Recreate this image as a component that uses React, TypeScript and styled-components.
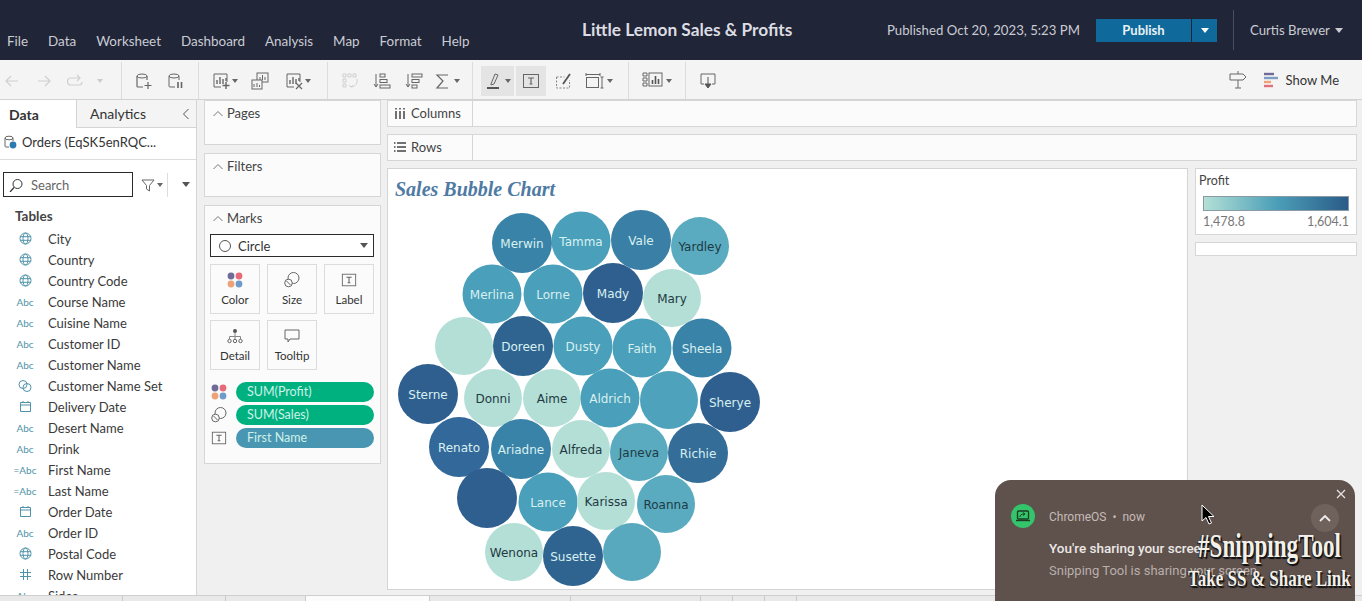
import React from 'react'
import styled, { createGlobalStyle } from 'styled-components'

const Global = createGlobalStyle`
  html, body { margin: 0; padding: 0; height: 100%; overflow: hidden; }
  body { font-family: 'Lato', 'Liberation Sans', sans-serif; background: #f0f0f0; color: #333; }
  * { box-sizing: border-box; }
`

const Page = styled.div`
  position: relative;
  width: 1362px;
  height: 601px;
  overflow: hidden;
  display: flex;
  flex-direction: column;
`

/* header */
const Header = styled.header`
  height: 60px;
  flex: none;
  display: flex;
  background: #212538;
  color: #c9ccd3;
`
const MenuBar = styled.nav`
  width: 582px;
  padding: 0 0 10px 7px;
  display: flex;
  align-items: flex-end;
  gap: 20px;
  font-size: 13.45px;
  line-height: 18px;
`
const Title = styled.h1`
  width: 305px;
  margin: 0;
  padding-top: 19px;
  font-size: 17.3px;
  line-height: 22px;
  font-weight: 700;
  color: #dcdde2;
  white-space: nowrap;
`
const HeaderRight = styled.div`
  flex: 1;
  display: flex;
  align-items: flex-start;
  padding-top: 19px;
  font-size: 13.2px;
  line-height: 23px;
`
const Published = styled.span`
  width: 209px;
  white-space: nowrap;
`
const PublishButton = styled.button`
  width: 95px;
  height: 23px;
  border: 0;
  padding: 0;
  font: 700 13px/23px 'Lato', sans-serif;
  background: #0f6a9b;
  color: #e9f1f6;
`
const PublishCaret = styled.button`
  width: 25px;
  height: 23px;
  margin-left: 1px;
  border: 0;
  padding: 0;
  background: #0f6a9b;
  display: flex;
  align-items: center;
  justify-content: center;
`
const HeaderDivider = styled.i`
  width: 1px;
  height: 40px;
  margin: -9px 16px 0 16px;
  background: #4b4f60;
`
const UserName = styled.span`
  white-space: nowrap;
  display: flex;
  align-items: center;
  gap: 5px;
`
const Caret = styled.i<{ $c?: string; $s?: number }>`
  display: inline-block;
  flex: none;
  width: 0;
  height: 0;
  border-left: ${p => p.$s ?? 3}px solid transparent;
  border-right: ${p => p.$s ?? 3}px solid transparent;
  border-top: ${p => (p.$s ?? 3) + 1}px solid ${p => p.$c ?? '#666'};
`

/* toolbar */
const Toolbar = styled.div`
  height: 40px;
  flex: none;
  display: flex;
  background: #f4f4f4;
  border-bottom: 1px solid #d2d2d2;
`
const ToolGroup = styled.div<{ $w: number; $pad?: number; $gap?: number; $plain?: boolean }>`
  width: ${p => p.$w}px;
  flex: none;
  height: 37px;
  margin-top: 2px;
  padding-left: ${p => p.$pad ?? 0}px;
  display: flex;
  align-items: center;
  gap: ${p => p.$gap ?? 8}px;
  border-right: ${p => (p.$plain ? 'none' : '1px solid #dcdcdc')};
`
const Tool = styled.span<{ $w?: number; $active?: boolean }>`
  width: ${p => p.$w ?? 24}px;
  height: 30px;
  flex: none;
  display: flex;
  align-items: center;
  justify-content: center;
  gap: 2px;
  background: ${p => (p.$active ? '#e4e4e4' : 'transparent')};
`
const ToolbarEnd = styled.div`
  flex: 1;
  display: flex;
  align-items: center;
  justify-content: flex-end;
  padding-right: 23px;
  gap: 15px;
  font-size: 13px;
  color: #333;
`
const ShowMe = styled.span`
  display: flex;
  align-items: center;
  gap: 7px;
`

/* body */
const Body = styled.div`
  height: 495px;
  flex: none;
  display: flex;
`
const DataPane = styled.aside`
  width: 197px;
  flex: none;
  background: #fff;
  border-right: 1px solid #d4d4d4;
  overflow: hidden;
`
const PaneTabs = styled.div`
  height: 28px;
  display: flex;
  font-size: 14px;
`
const PaneTab = styled.div<{ $active?: boolean }>`
  width: ${p => (p.$active ? 76 : 120)}px;
  padding-left: ${p => (p.$active ? 9 : 13)}px;
  line-height: 27px;
  font-weight: ${p => (p.$active ? 700 : 400)};
  background: ${p => (p.$active ? '#fff' : '#f4f4f4')};
  border-bottom: ${p => (p.$active ? 'none' : '1px solid #d4d4d4')};
  border-left: ${p => (p.$active ? 'none' : '1px solid #d4d4d4')};
  display: flex;
  align-items: center;
  justify-content: space-between;
  padding-right: 6px;
`
const SourceRow = styled.div`
  height: 32px;
  padding: 0 0 4px 3px;
  display: flex;
  align-items: center;
  gap: 5px;
  font-size: 13px;
  border-bottom: 1px solid #dcdcdc;
  white-space: nowrap;
`
const SearchRow = styled.div`
  height: 37px;
  padding: 12px 0 0 3px;
  display: flex;
  align-items: center;
`
const SearchBox = styled.div`
  width: 130px;
  height: 25px;
  border: 1px solid #2a2a2a;
  display: flex;
  align-items: center;
  gap: 8px;
  padding-left: 5px;
  font-size: 13px;
  color: #666;
`
const SearchTools = styled.div`
  width: 63px;
  display: flex;
  align-items: center;
  padding-left: 8px;
  gap: 2px;
`
const SearchDivider = styled.i`
  width: 1px;
  height: 24px;
  margin: 0 12px 0 2px;
  background: #ddd;
`
const TablesHead = styled.div`
  margin-top: 11px;
  padding-left: 15px;
  font-size: 13.5px;
  font-weight: 700;
  line-height: 17px;
  color: #444;
`
const FieldList = styled.ul`
  list-style: none;
  margin: 3px 0 0;
  padding: 0;
`
const Field = styled.li`
  height: 21px;
  display: flex;
  align-items: center;
  font-size: 13px;
  color: #3a3a3a;
  white-space: nowrap;
`
const FieldIconBox = styled.span`
  width: 24px;
  margin-right: 11px;
  margin-left: 13px;
  text-align: center;
  flex: none;
  display: flex;
  justify-content: center;
  color: #4f93a8;
  font-size: 10px;
`

/* cards column */
const CardsColumn = styled.div`
  width: 190px;
  flex: none;
  padding: 0 6px 0 7px;
  display: flex;
  flex-direction: column;
  gap: 8px;
`
const Card = styled.section<{ $h: number }>`
  height: ${p => p.$h}px;
  flex: none;
  background: #fbfbfb;
  border: 1px solid #d6d6d6;
  font-size: 13px;
`
const CardHead = styled.div`
  height: 24px;
  padding-left: 8px;
  display: flex;
  align-items: center;
  gap: 4px;
  color: #444;
`
const MarkSelect = styled.div`
  margin: 4px 6px 0 5px;
  height: 23px;
  border: 1px solid #2a2a2a;
  background: #fff;
  display: flex;
  align-items: center;
  padding: 0 5px 0 8px;
  gap: 7px;
  font-size: 13px;
`
const MarkCircle = styled.i`
  width: 12px;
  height: 12px;
  border-radius: 50%;
  border: 1px solid #555;
`
const MarkGrid = styled.div`
  margin: 7px 6px 0 5px;
  display: grid;
  grid-template-columns: repeat(3, 50px);
  gap: 6px 7px;
`
const MarkButton = styled.div`
  height: 50px;
  border: 1px solid #dcdcdc;
  background: #fbfbfb;
  display: flex;
  flex-direction: column;
  align-items: center;
  justify-content: flex-end;
  gap: 5px;
  padding-bottom: 7px;
  font-size: 11.5px;
  color: #333;
`
const PillList = styled.div`
  margin: 12px 6px 0 5px;
  display: flex;
  flex-direction: column;
  gap: 3px;
`
const PillRow = styled.div`
  display: flex;
  align-items: center;
  gap: 8px;
`
const PillIcon = styled.span`
  width: 18px;
  display: flex;
  justify-content: center;
`
const Pill = styled.div<{ $c: string }>`
  width: 138px;
  height: 20px;
  border-radius: 10px;
  padding-left: 11px;
  background: ${p => p.$c};
  color: #cdf1e8;
  font-size: 12.5px;
  line-height: 20px;
`

/* workspace */
const Workspace = styled.div`
  flex: 1;
  min-width: 0;
  padding-right: 5px;
  display: flex;
  flex-direction: column;
  gap: 7px;
`
const Shelf = styled.div`
  height: 27px;
  flex: none;
  display: flex;
  background: #fbfbfb;
  border: 1px solid #d6d6d6;
  font-size: 13px;
`
const ShelfLabel = styled.div`
  width: 85px;
  border-right: 1px solid #d6d6d6;
  padding: 0 0 2px 6px;
  display: flex;
  align-items: center;
  gap: 5px;
  color: #444;
`
const ViewRow = styled.div`
  flex: 1;
  min-height: 0;
  display: flex;
  gap: 7px;
  padding-bottom: 5px;
`
const Canvas = styled.div`
  width: 801px;
  background: #fff;
  border: 1px solid #d4d4d4;
  overflow: hidden;
`
const SheetTitle = styled.h2`
  margin: 0;
  height: 40px;
  padding: 9px 0 0 7px;
  font: italic 700 20px/23px 'Liberation Serif', serif;
  color: #4e7aa3;
`
const LegendColumn = styled.div`
  flex: 1;
  display: flex;
  flex-direction: column;
  gap: 7px;
`
const Legend = styled.div`
  height: 67px;
  background: #fff;
  border: 1px solid #d6d6d6;
  padding: 4px 3px 0;
  font-size: 12.5px;
  color: #444;
`
const GradientBar = styled.div`
  height: 15px;
  margin: 8px 4px 0 4px;
  background: linear-gradient(90deg, #b3e0d6 0%, #4c9fb8 50%, #2a5b88 100%);
  border: 1px solid #8a9aa5;
`
const LegendScale = styled.div`
  margin: 3px 4px 0 4px;
  display: flex;
  justify-content: space-between;
  font-size: 12.5px;
  color: #777;
`
const LegendStub = styled.div`
  height: 14px;
  background: #fff;
  border: 1px solid #d6d6d6;
`

/* sheet tabs */
const SheetTabs = styled.div`
  flex: 1;
  display: flex;
  background: #e9e9e9;
  border-top: 1px solid #cfcfcf;
`
const SheetTab = styled.div<{ $w: number; $active?: boolean }>`
  width: ${p => p.$w}px;
  flex: none;
  border-right: 1px solid #c9c9c9;
  background: ${p => (p.$active ? '#fbfbfb' : 'transparent')};
`

/* notification overlay */
const Notification = styled.div`
  position: absolute;
  left: 995px;
  top: 480px;
  width: 360px;
  height: 160px;
  border-radius: 16px;
  background: #5f514c;
  padding: 24px 0 0 16px;
  display: flex;
  gap: 12px;
  font-family: 'Roboto', sans-serif;
`
const NotifyBadge = styled.div`
  width: 24px;
  height: 24px;
  border-radius: 50%;
  background: #34c46c;
  flex: none;
  display: flex;
  align-items: center;
  justify-content: center;
`
const NotifyText = styled.div`
  padding: 4px 0 0 2px;
`
const NotifyMeta = styled.div`
  font-size: 12px;
  line-height: 18px;
  color: #c4bcb8;
`
const NotifyTitle = styled.div`
  margin-top: 13px;
  font-size: 13.5px;
  line-height: 18px;
  font-weight: 500;
  color: #ece8e6;
`
const NotifyBody = styled.div`
  margin-top: 5px;
  font-size: 13px;
  line-height: 18px;
  color: #b8afab;
`
const NotifyAction = styled.div`
  margin-top: 20px;
  font-size: 13px;
  font-weight: 500;
  color: #5fd08a;
`
const CloseButton = styled.span`
  position: absolute;
  right: 8px;
  top: 8px;
  display: flex;
`
const ExpandButton = styled.span`
  position: absolute;
  right: 16px;
  top: 24px;
  width: 28px;
  height: 28px;
  border-radius: 50%;
  background: #6f625d;
  display: flex;
  align-items: center;
  justify-content: center;
`
const Cursor = styled.svg`
  position: absolute;
  left: 1201px;
  top: 504px;
`
const WatermarkTop = styled.div`
  position: absolute;
  left: 1198px;
  top: 527px;
  transform: scaleX(0.7);
  transform-origin: left top;
  font: 700 33px/38px 'Liberation Serif', serif;
  color: #f4f1ea;
  white-space: nowrap;
  text-shadow: 2px 2px 1px #111, -1px 1px 1px #222;
`
const WatermarkBottom = styled.div`
  position: absolute;
  left: 1188px;
  top: 566px;
  transform: scaleX(0.74);
  transform-origin: left top;
  font: 700 23px/26px 'Liberation Serif', serif;
  color: #f4f1ea;
  white-space: nowrap;
  text-shadow: 2px 2px 1px #111, -1px 1px 1px #222;
`

/* icons */
const stroke = { fill: 'none', stroke: '#666', strokeWidth: 1 }
const Svg = ({ s = 18, children }: { s?: number; children: React.ReactNode }) => (
  <svg width={s} height={s} viewBox={`0 0 ${s} ${s}`} style={{ flex: 'none', display: 'block' }}>{children}</svg>
)
const Back = () => <Svg><path d="M15 9H3M8 4 3 9l5 5" fill="none" stroke="#d0d0d0" strokeWidth="1.2" /></Svg>
const Forward = () => <Svg><path d="M3 9h12M10 4l5 5-5 5" fill="none" stroke="#d0d0d0" strokeWidth="1.2" /></Svg>
const Loop = () => <Svg><path d="M13 6H5a3 3 0 0 0 0 7h8a3 3 0 0 0 3-3M11 3l3 3-3 3" transform="translate(-1 0)" fill="none" stroke="#d0d0d0" strokeWidth="1.2" /></Svg>
const DbPlus = () => <Svg><ellipse cx="7" cy="4" rx="5" ry="2" {...stroke} /><path d="M2 4v10q0 1 1 1h5M12 4v4M13 10v7M9.5 13.5h7" {...stroke} strokeWidth="1.2" /></Svg>
const DbPause = () => <Svg><ellipse cx="7" cy="4" rx="5" ry="2" {...stroke} /><path d="M2 4v10q0 1 1 1h5M12 4v4" {...stroke} /><path d="M11 10v6M14.5 10v6" stroke="#666" strokeWidth="1.6" /></Svg>
const NewSheet = ({ x }: { x?: boolean }) => (
  <Svg>
    <path d="M9 15H2V2h13v8" {...stroke} />
    <path d="M5 12V8M8 12V5M11 12V7M14 9V6" stroke="#666" strokeWidth="1.4" />
    {x ? <path d="M11 11l6 6M17 11l-6 6" stroke="#666" strokeWidth="1.2" /> : <path d="M14 10v7M10.5 13.5h7" stroke="#666" strokeWidth="1.4" />}
  </Svg>
)
const Duplicate = () => (
  <Svg>
    <rect x="6" y="1" width="11" height="9" {...stroke} fill="#f4f4f4" />
    <rect x="1" y="8" width="10" height="9" {...stroke} fill="#f4f4f4" />
    <path d="M9 8V5M11.5 8V3M14 8V5M3 15v-3M6 15v-4M8.5 15v-2" stroke="#666" />
  </Svg>
)
const Swap = () => (
  <Svg><path d="M2 2h3v3H2zM7 2h3v3H7zM12 2h3v3h-3zM2 7h3v3H2zM2 12h3v3H2z" fill="none" stroke="#cfcfcf" /><path d="M16 7c1 4-2 8-6 8M8 13l2 2 2-2" fill="none" stroke="#cfcfcf" /></Svg>
)
const SortAsc = () => (
  <Svg><path d="M3 2v13M1 12l2 3 2-3" {...stroke} /><rect x="7" y="2" width="5" height="3" {...stroke} /><rect x="7" y="7.5" width="7" height="3" {...stroke} /><rect x="7" y="13" width="10" height="3" {...stroke} /></Svg>
)
const SortDesc = () => (
  <Svg><path d="M3 2v13M1 12l2 3 2-3" {...stroke} /><rect x="7" y="2" width="10" height="3" {...stroke} /><rect x="7" y="7.5" width="7" height="3" {...stroke} /><rect x="7" y="13" width="5" height="3" {...stroke} /></Svg>
)
const Sigma = () => <Svg><path d="M14 3H3l6 6-6 7h11" fill="none" stroke="#666" strokeWidth="1.2" /></Svg>
const Highlight = () => (
  <Svg><path d="M6 12 10 2l3 1-4 9-3 1z" {...stroke} /><path d="M2 16h12" stroke="#555" strokeWidth="2" /></Svg>
)
const TextBox = ({ s = 18 }: { s?: number }) => (
  <svg width={s} height={s} viewBox="0 0 18 18" style={{ flex: 'none', display: 'block' }}><rect x="1.5" y="2.5" width="15" height="13" {...stroke} /><path d="M6 6h6M9 6v6M7.5 12h3" stroke="#666" strokeWidth="1.2" /></svg>
)
const EditBox = () => (
  <Svg><path d="M1.5 5h8M1.5 5v11h13v-8" fill="none" stroke="#888" strokeDasharray="2 1.5" /><path d="M8 12l7-10" stroke="#555" strokeWidth="1.8" /></Svg>
)
const FitBox = () => (
  <Svg s={20}><path d="M1 1.5h14M1 0v3M15 0v3" transform="translate(0 2)" stroke="#666" fill="none" /><rect x="1.5" y="6.5" width="12" height="10" {...stroke} /><path d="M17 6v11M15.5 6h3M15.5 17h3" stroke="#666" fill="none" /></Svg>
)
const Cards = () => (
  <Svg s={22}><path d="M1 3h4v3H1zM1 8h4v3H1zM1 13h4v3H1z" {...stroke} /><rect x="7" y="3" width="13" height="13" {...stroke} /><path d="M10.5 14v-4M13.5 14V6M16.5 14V9" stroke="#555" strokeWidth="1.6" /></Svg>
)
const Present = () => (
  <Svg><path d="M5 12H2V2h14v10h-3" {...stroke} /><path d="M9 5v9M6 12l3 4 3-4z" stroke="#555" fill="#555" strokeWidth="1" /></Svg>
)
const SignPost = () => (
  <Svg s={20}><path d="M2 4h13l3 3-3 3H2zM10 1v3M10 10v8M7 18h6" {...stroke} /></Svg>
)
const ShowMeIcon = () => (
  <Svg s={16}>
    <path d="M1 2h10" stroke="#6f6a96" strokeWidth="2.4" />
    <path d="M1 6h14" stroke="#7f9cc4" strokeWidth="2.4" />
    <path d="M1 10h7" stroke="#eda27a" strokeWidth="2.4" />
    <path d="M1 14h9" stroke="#e2707c" strokeWidth="2.4" />
  </Svg>
)
const Chevron = () => <svg width="10" height="7" viewBox="0 0 10 7"><path d="M.5 6 5 1.5 9.5 6" fill="none" stroke="#777" /></svg>
const SourceIcon = () => (
  <Svg s={14}><ellipse cx="6" cy="3" rx="4" ry="1.8" {...stroke} /><path d="M2 3v8q0 1 1 1h3M10 3v3" {...stroke} /><circle cx="10" cy="10" r="3.4" fill="#2d7ab0" /></Svg>
)
const SearchIcon = () => <Svg s={14}><circle cx="8.5" cy="6" r="4.5" fill="none" stroke="#333" /><path d="M5 9.5 1 14" stroke="#333" strokeWidth="1.2" /></Svg>
const FilterIcon = () => <Svg s={14}><path d="M1 2h12L8.5 7.5V13L5.5 11V7.5z" {...stroke} /></Svg>
const ColorDots = ({ s = 16 }: { s?: number }) => (
  <svg width={s} height={s} viewBox="0 0 16 16">
    <circle cx="4" cy="4" r="3.4" fill="#6f6a96" />
    <circle cx="12" cy="4" r="3.4" fill="#e66a78" />
    <circle cx="4" cy="12" r="3.4" fill="#eda27a" />
    <circle cx="12" cy="12" r="3.4" fill="#6f9bc8" />
  </svg>
)
const SizeIcon = ({ s = 16 }: { s?: number }) => (
  <svg width={s} height={s} viewBox="0 0 16 16">
    <circle cx="9.5" cy="6" r="5.5" {...stroke} />
    <circle cx="4.5" cy="11" r="3.8" fill="#fbfbfb" stroke="#666" />
    <path d="M2.5 9l4 4" stroke="#666" />
  </svg>
)
const DetailIcon = () => (
  <svg width="16" height="16" viewBox="0 0 16 16">
    <circle cx="8" cy="3" r="2" fill="#555" />
    <path d="M8 5v3M2.5 11V8.5h11V11M8 8v3" stroke="#888" fill="none" />
    <circle cx="2.5" cy="13" r="1.7" {...stroke} />
    <circle cx="8" cy="13" r="1.7" {...stroke} />
    <circle cx="13.5" cy="13" r="1.7" {...stroke} />
  </svg>
)
const TooltipIcon = () => <svg width="16" height="16" viewBox="0 0 16 16"><path d="M1 2h14v9H6l-2 3v-3H1z" {...stroke} /></svg>

const Globe = () => (
  <svg width="13" height="13" viewBox="0 0 13 13" fill="none" stroke="#4f93a8">
    <circle cx="6.5" cy="6.5" r="5.5" />
    <ellipse cx="6.5" cy="6.5" rx="2.5" ry="5.5" />
    <path d="M1 4.7h11M1 8.3h11" />
  </svg>
)
const CalendarIcon = () => (
  <svg width="13" height="13" viewBox="0 0 13 13" fill="none" stroke="#4f93a8">
    <path d="M1.5 2.5h10v9h-10zM1.5 5h10M4 1v2M9 1v2" />
  </svg>
)
const SetIcon = () => (
  <svg width="14" height="14" viewBox="0 0 14 14" fill="none" stroke="#4f93a8">
    <circle cx="5" cy="5.5" r="4" />
    <circle cx="9" cy="8.5" r="4" />
  </svg>
)
const HashIcon = () => (
  <svg width="13" height="13" viewBox="0 0 13 13" fill="none" stroke="#4f93a8">
    <path d="M4.5 1v11M8.5 1v11M1 4.5h11M1 8.5h11" />
  </svg>
)

type FieldKind = 'geo' | 'abc' | 'set' | 'date' | 'param' | 'num'
const fieldIcon = (k: FieldKind) => {
  if (k === 'geo') return <Globe />
  if (k === 'set') return <SetIcon />
  if (k === 'date') return <CalendarIcon />
  if (k === 'num') return <HashIcon />
  if (k === 'param') return <span>=Abc</span>
  return <span>Abc</span>
}

const fields: [string, FieldKind][] = [
  ['City', 'geo'], ['Country', 'geo'], ['Country Code', 'geo'], ['Course Name', 'abc'],
  ['Cuisine Name', 'abc'], ['Customer ID', 'abc'], ['Customer Name', 'abc'], ['Customer Name Set', 'set'],
  ['Delivery Date', 'date'], ['Desert Name', 'abc'], ['Drink', 'abc'], ['First Name', 'param'],
  ['Last Name', 'param'], ['Order Date', 'date'], ['Order ID', 'abc'], ['Postal Code', 'geo'],
  ['Row Number', 'num'], ['Sides', 'abc'],
]

const DARK = '#2f5f8f'
const DEEP = '#3a83a8'
const MID = '#4a9fba'
const SOFT = '#5aabc0'
const PALE = '#b4dfd6'

// cx, cy, r, fill, label
const bubbles: [number, number, number, string, string][] = [
  [522, 243, 30, DEEP, 'Merwin'], [581, 241, 29.5, MID, 'Tamma'], [641, 240, 30, '#3a7fa6', 'Vale'], [700, 246, 29, SOFT, 'Yardley'],
  [492, 294, 29.5, MID, 'Merlina'], [553, 294, 29.5, MID, 'Lorne'], [613, 293, 30, DARK, 'Mady'], [672, 298, 29, PALE, 'Mary'],
  [464, 346, 29, PALE, ''], [523, 346, 30, '#2f6491', 'Doreen'], [583, 346, 29.5, MID, 'Dusty'], [642, 348, 29.5, MID, 'Faith'], [702, 348, 29.5, DEEP, 'Sheela'],
  [428, 394, 30, DARK, 'Sterne'], [493, 398, 29, PALE, 'Donni'], [552, 398, 29, PALE, 'Aime'], [610, 398, 29.5, MID, 'Aldrich'], [669, 400, 29, '#4ea2bb', ''], [730, 402, 30, DARK, 'Sherye'],
  [459, 447, 30, '#32689a', 'Renato'], [521, 449, 30, DEEP, 'Ariadne'], [581, 449, 29, PALE, 'Alfreda'], [639, 452, 29, SOFT, 'Janeva'], [698, 453, 30, '#336d98', 'Richie'],
  [487, 498, 30, DARK, ''], [548, 502, 29.5, MID, 'Lance'], [606, 501, 29, PALE, 'Karissa'], [666, 504, 29, SOFT, 'Roanna'],
  [514, 552, 29, PALE, 'Wenona'], [573, 556, 30, '#2f6491', 'Susette'], [632, 552, 29, '#58a8be', ''],
]
const darkText = [PALE, SOFT]

const BubbleChart = () => (
  <svg width="800" height="381" viewBox="388 209 800 381" style={{ display: 'block' }}>
    {bubbles.map(([cx, cy, r, fill, label], i) => (
      <g key={i}>
        <circle cx={cx} cy={cy} r={r} fill={fill} />
        {label && (
          <text
            x={cx}
            y={cy + 5}
            textAnchor="middle"
            fontFamily="'DejaVu Sans', sans-serif"
            fontSize="12"
            fill={darkText.includes(fill) ? '#1e3a44' : '#d8f0f0'}
          >
            {label}
          </text>
        )}
      </g>
    ))}
  </svg>
)

const menu = ['File', 'Data', 'Worksheet', 'Dashboard', 'Analysis', 'Map', 'Format', 'Help']
const tabWidths = [123, 103, 80, 124, 141, 130, 32, 32, 32]

export default function App() {
  return (
    <Page>
      <Global />
      <Header>
        <MenuBar>{menu.map(m => <span key={m}>{m}</span>)}</MenuBar>
        <Title>Little Lemon Sales &amp; Profits</Title>
        <HeaderRight>
          <Published>Published Oct 20, 2023, 5:23 PM</Published>
          <PublishButton>Publish</PublishButton>
          <PublishCaret><Caret $c="#fff" $s={4} /></PublishCaret>
          <HeaderDivider />
          <UserName>Curtis Brewer <Caret $c="#c9ccd3" $s={4} /></UserName>
        </HeaderRight>
      </Header>

      <Toolbar>
        <ToolGroup $w={122}>
          <Tool><Back /></Tool>
          <Tool><Forward /></Tool>
          <Tool><Loop /></Tool>
          <Tool $w={8}><Caret $c="#ccc" /></Tool>
        </ToolGroup>
        <ToolGroup $w={77} $pad={10}>
          <Tool><DbPlus /></Tool>
          <Tool><DbPause /></Tool>
        </ToolGroup>
        <ToolGroup $w={129} $pad={12} $gap={7}>
          <Tool $w={28}><NewSheet /><Caret /></Tool>
          <Tool $w={28}><Duplicate /></Tool>
          <Tool $w={34}><NewSheet x /><Caret /></Tool>
        </ToolGroup>
        <ToolGroup $w={145} $pad={10} $gap={8}>
          <Tool><Swap /></Tool>
          <Tool><SortAsc /></Tool>
          <Tool><SortDesc /></Tool>
          <Tool $w={26}><Sigma /><Caret /></Tool>
        </ToolGroup>
        <ToolGroup $w={156} $pad={8} $gap={2}>
          <Tool $w={33} $active><Highlight /><Caret /></Tool>
          <Tool $w={30} $active><TextBox /></Tool>
          <Tool $w={32}><EditBox /></Tool>
          <Tool $w={34}><FitBox /><Caret /></Tool>
        </ToolGroup>
        <ToolGroup $w={57} $pad={12}>
          <Tool $w={32}><Cards /><Caret /></Tool>
        </ToolGroup>
        <ToolGroup $w={40} $pad={10} $plain>
          <Tool><Present /></Tool>
        </ToolGroup>
        <ToolbarEnd>
          <SignPost />
          <ShowMe><ShowMeIcon /> Show Me</ShowMe>
        </ToolbarEnd>
      </Toolbar>

      <Body>
        <DataPane>
          <PaneTabs>
            <PaneTab $active>Data</PaneTab>
            <PaneTab>Analytics <svg width="8" height="12" viewBox="0 0 8 12"><path d="M6.5 1 1.5 6l5 5" fill="none" stroke="#555" /></svg></PaneTab>
          </PaneTabs>
          <SourceRow><SourceIcon /> Orders (EqSK5enRQC...</SourceRow>
          <SearchRow>
            <SearchBox><SearchIcon /> Search</SearchBox>
            <SearchTools>
              <FilterIcon /><Caret />
              <SearchDivider />
              <Caret $c="#555" $s={4} />
            </SearchTools>
          </SearchRow>
          <TablesHead>Tables</TablesHead>
          <FieldList>
            {fields.map(([name, kind]) => (
              <Field key={name}>
                <FieldIconBox>{fieldIcon(kind)}</FieldIconBox>
                {name}
              </Field>
            ))}
          </FieldList>
        </DataPane>

        <CardsColumn>
          <Card $h={45}><CardHead><Chevron /> Pages</CardHead></Card>
          <Card $h={44}><CardHead><Chevron /> Filters</CardHead></Card>
          <Card $h={259}>
            <CardHead><Chevron /> Marks</CardHead>
            <MarkSelect><MarkCircle /> Circle <Caret $c="#555" $s={4} style={{ marginLeft: 'auto' }} /></MarkSelect>
            <MarkGrid>
              <MarkButton><ColorDots />Color</MarkButton>
              <MarkButton><SizeIcon />Size</MarkButton>
              <MarkButton><TextBox s={16} />Label</MarkButton>
              <MarkButton><DetailIcon />Detail</MarkButton>
              <MarkButton><TooltipIcon />Tooltip</MarkButton>
            </MarkGrid>
            <PillList>
              <PillRow><PillIcon><ColorDots /></PillIcon><Pill $c="#00b180">SUM(Profit)</Pill></PillRow>
              <PillRow><PillIcon><SizeIcon /></PillIcon><Pill $c="#00b180">SUM(Sales)</Pill></PillRow>
              <PillRow><PillIcon><TextBox s={16} /></PillIcon><Pill $c="#4996b2">First Name</Pill></PillRow>
            </PillList>
          </Card>
        </CardsColumn>

        <Workspace>
          <Shelf>
            <ShelfLabel>
              <svg width="12" height="12" viewBox="0 0 12 12"><path d="M2 4v8M6 4v8M10 4v8M2 1v1.5M6 1v1.5M10 1v1.5" stroke="#444" strokeWidth="1.5" /></svg>
              Columns
            </ShelfLabel>
          </Shelf>
          <Shelf>
            <ShelfLabel>
              <svg width="12" height="12" viewBox="0 0 12 12"><path d="M3 2h9M3 6h9M3 10h9M0 2h1.5M0 6h1.5M0 10h1.5" stroke="#444" strokeWidth="1.3" /></svg>
              Rows
            </ShelfLabel>
          </Shelf>
          <ViewRow>
            <Canvas>
              <SheetTitle>Sales Bubble Chart</SheetTitle>
              <BubbleChart />
            </Canvas>
            <LegendColumn>
              <Legend>
                Profit
                <GradientBar />
                <LegendScale><span>1,478.8</span><span>1,604.1</span></LegendScale>
              </Legend>
              <LegendStub />
            </LegendColumn>
          </ViewRow>
        </Workspace>
      </Body>

      <SheetTabs>
        {tabWidths.map((w, i) => <SheetTab key={i} $w={w} $active={i === 3} />)}
      </SheetTabs>

      <Notification>
        <NotifyBadge>
          <svg width="14" height="12" viewBox="0 0 14 12"><rect x="1.5" y="1" width="11" height="8" rx="1" fill="none" stroke="#1d3a22" strokeWidth="1.3" /><path d="M0 10.5h14" stroke="#1d3a22" strokeWidth="1.4" /><path d="M4 7c0-2 1.5-3 4-3M7 2.5 9 4 7 5.5" fill="none" stroke="#1d3a22" /></svg>
        </NotifyBadge>
        <NotifyText>
          <NotifyMeta>ChromeOS &nbsp;•&nbsp; now</NotifyMeta>
          <NotifyTitle>You're sharing your screen</NotifyTitle>
          <NotifyBody>Snipping Tool is sharing your screen.</NotifyBody>
          <NotifyAction>Stop</NotifyAction>
        </NotifyText>
        <CloseButton>
          <svg width="12" height="12" viewBox="0 0 12 12"><path d="M2 2l8 8M10 2l-8 8" stroke="#e8e4e2" strokeWidth="1.2" /></svg>
        </CloseButton>
        <ExpandButton>
          <svg width="14" height="9" viewBox="0 0 14 9"><path d="M2 7l5-5 5 5" fill="none" stroke="#eee" strokeWidth="1.8" /></svg>
        </ExpandButton>
      </Notification>
      <Cursor width="14" height="21" viewBox="0 0 14 21">
        <path d="M1 1v16l4-3.5 3 6.5 2.5-1-3-6.5H13z" fill="#000" stroke="#fff" strokeWidth="1" />
      </Cursor>
      <WatermarkTop>#SnippingTool</WatermarkTop>
      <WatermarkBottom>Take SS &amp; Share Link</WatermarkBottom>
    </Page>
  )
}
